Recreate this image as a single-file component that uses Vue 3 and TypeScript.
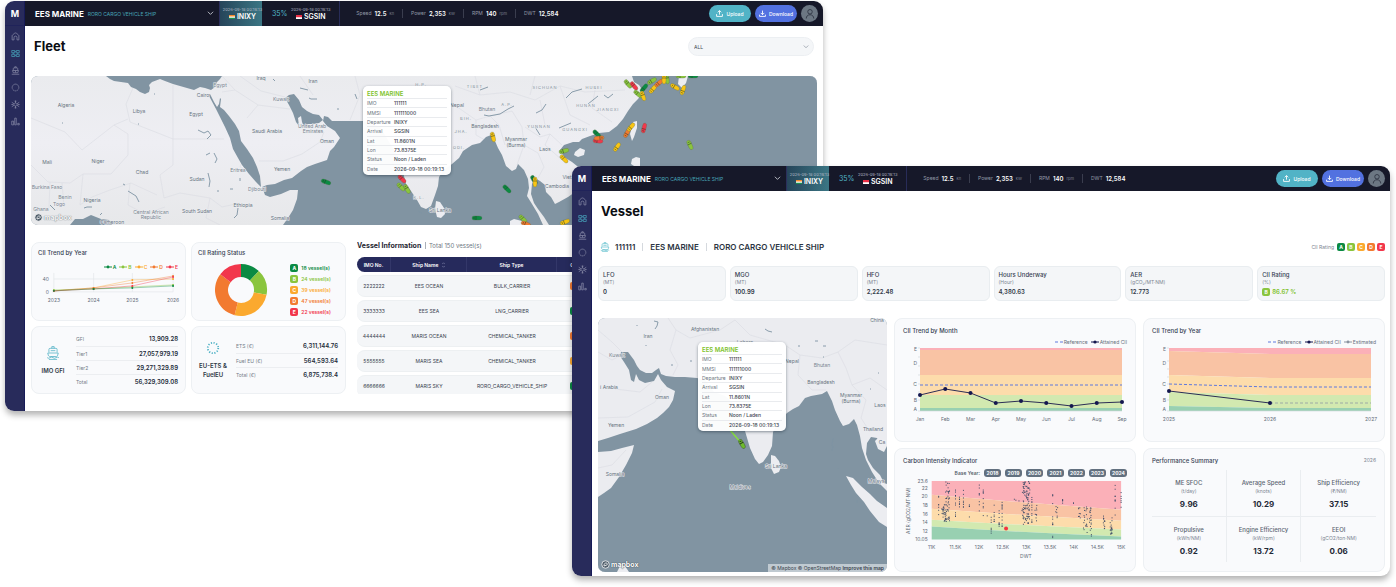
<script setup lang="ts">
interface Vessel { x: number; y: number; r: number; c: string }
interface Label { x: number; y: number; t: string; k?: string }

const windows = [
  { id: 'fleet', title: 'Fleet' },
  { id: 'vessel', title: 'Vessel' },
]

const colors: Record<string, string> = { A: '#0b8a43', B: '#8ac53e', C: '#fba92f', D: '#f27a30', E: '#f2374c' }
const grades = ['A', 'B', 'C', 'D', 'E']

const shipPath = 'M10 4V1h4v3M5 11V6a2 2 0 0 1 2-2h10a2 2 0 0 1 2 2v5M8 8h8M3 12h18l-1 4c-1 2-2 2-3 2H7c-1 0-2 0-3-2zM2 20q2.5 2 5 0t5 0 5 0 5 0M5 23h14'
const nav = [
  { name: 'Home', d: 'M3 21V10q0-1 1-2l6-5q2-1 4 0l6 5q1 1 1 2v11h-5v-6a4 4 0 0 0-8 0v6z', dash: '' },
  { name: 'Fleet', d: 'M2 4h8v6H2zM14 4h8v6h-8zM2 14h8v6H2zM14 14h8v6h-8zM10 7h4M10 17h4M6 10v4M18 10v4', dash: '' },
  { name: 'Vessel', d: 'M10 5V2h4v3M6 11V7q0-2 2-2h8q2 0 2 2v4M4 12h16l-2 6H6zM12 12v5M2 22h20', dash: '' },
  { name: 'EU ETS', d: 'M12 3a9 9 0 1 0 .01 0z', dash: '4 1' },
  { name: 'Engine', d: 'M12 8a4 4 0 1 0 .01 0zM12 1v7M12 16v7M2 6l6 4M16 14l6 4M22 6l-6 4M8 14l-6 4M9 2l3 3 3-3M9 22l3-3 3 3M1 12h5M18 12h5', dash: '' },
  { name: 'Reports', d: 'M2 11h5v10H2zM10 3h4v18h-4zM18 17h4v4h-4z', dash: '' },
]

const metrics = [
  { k: 'Speed', v: '12.5', u: 'kn' },
  { k: 'Power', v: '2,353', u: 'kW' },
  { k: 'RPM', v: '140', u: 'rpm' },
  { k: 'DWT', v: '12,584', u: '' },
]

const popup = [
  ['IMO', '111111'], ['MMSI', '111111000'], ['Departure', 'INIXY'], ['Arrival', 'SGSIN'],
  ['Lat', '11.8601N'], ['Lon', '73.8375E'], ['Status', 'Noon / Laden'], ['Date', '2026-09-18 00:19:13'],
]

const fleetSeas = [
  'M106 76L110 79 114 81 121 82 128 83 131 87 136 89 140 92 145 94 149 92 150 88 149 85 152 82 160 79 165 81 173 84 180 86 187 88 194 90 200 87 205 88 211 90 215 87 217 82 220 79 222 76Z',
  'M208 94L210 94 214 102 217 107 219 104 220 98 221 99 220 107 224 110 229 116 235 124 239 131 241 141 247 149 253 158 257 167 260 176 261 187 256 182 249 174 242 165 238 158 233 149 230 138 225 127 220 117 216 109Z',
  'M289 95L294 94 299 100 302 107 307 111 313 114 319 115 323 120 319 123 313 124 308 124 304 127 302 122 301 116 298 118 299 126 296 122 293 113 289 105 285 98Z',
  'M262 187L267 185 275 184 284 180 292 178 301 171 307 167 315 164 327 160 330 151 334 147 340 138 335 131 327 126 323 121 324 116 328 117 332 121 345 121 363 121 380 127 400 160 406 184 411 191 417 200 421 207 426 209 431 206 435 195 438 186 439 177 444 170 452 164 459 158 463 151 472 145 480 143 486 137 491 135 495 141 498 148 502 155 506 166 512 171 516 169 518 164 524 170 528 179 529 188 527 196 532 204 538 214 543 225 283 225 288 218 293 210 297 199 298 190 290 190 281 194 270 197 265 195Z',
  'M549 225L544 217 538 209 534 203 531 194 532 184 535 178 540 181 545 185 546 192 551 197 555 204 559 202 568 197 578 190 586 179 582 170 572 162 564 157 560 150 564 145 573 142 579 142 582 139 590 136 599 133 609 132 617 126 623 119 628 111 633 104 638 99 642 94 641 88 639 85 634 82 632 76 817 76 817 225Z',
  'M70 225L75 219 83 219 91 215 101 219 109 220 112 225Z',
]
const fleetIslands = [
  'M436 201L440 202 444 208 445 214 441 218 437 217 435 209Z',
  'M633 122L637 121 637 128 634 137 632 141 630 134Z',
  'M575 152L580 148 585 150 584 155 578 157 574 155Z',
  'M632 159L636 157 640 158 640 168 634 166 631 164Z',
  'M679 76L688 76 686 83 682 88 678 84Z',
  'M510 221L514 219 522 221 526 225 510 225Z',
]
const fleetBorders =
  'M31 118L65 132 82 150 114 125 128 119M133 88L126 104 130 122 173 139V85M173 139H224M173 139V165L160 175 164 198M114 125L128 134V155L111 174H83L70 183 48 182 31 165M83 174L80 205 92 197 110 190 131 183 157 195M164 198L180 193 210 198 222 207 240 203M210 198L206 218 220 225M247 149L240 167 253 174M222 76L235 90 258 105 290 109M222 92L235 90M258 105L247 118M283 161L302 154 320 142 324 132M283 161H259M240 76L261 91 285 97M300 76L313 95M355 76L360 95 350 120M130 183L128 205 145 214 165 207M50 182L49 208M62 183L64 207M453 104L476 120 490 116 512 111M476 120V135L485 140M490 116L499 125 505 145M512 111L522 127 524 145 517 165M525 127L540 137 550 134 562 145M524 145L538 153 544 167 538 178M550 134L545 145 561 159M455 86L480 95 510 92 535 100 560 86 585 92 625 90M540 100L545 125M560 86L570 115 590 125M595 90L592 108 612 122M480 95L475 76M535 76L530 95'
const fleetWater =
  'M198 130l6 3 4-2 3 4-4 4M206 155l4-2M214 153l3 6-2 4M84 208l3-1h5M208 173l2 8-1 6M238 208l-1 7-3 3M128 191l8 5 3 6M100 215l2-2M240 181v-3M50 205l5 5M62 123h1M138 124h1M154 94h1M337 109h2M355 94l2 5M309 98l2 1 6 0M484 115l5 1 11-2 8-5 6-3M566 98l6-6 10-3M536 113l6-3 4-6M559 128l12-5M604 95l4 3 5-4M588 104l10-8M540 135l-5-8M480 90l8-3M300 88l8 2M273 79l2 2M418 211l4 2M123 184l2 1M217 191h2M230 189h3'

const fleetLabels: Label[] = [
  { x: 66, y: 107, t: 'Algeria' }, { x: 139, y: 113, t: 'Libya' }, { x: 196, y: 116, t: 'Egypt' }, { x: 203, y: 97, t: 'Cairo' },
  { x: 220, y: 87, t: 'Egypt', k: 's' }, { x: 261, y: 80, t: 'Iraq' }, { x: 313, y: 83, t: 'Iran' }, { x: 281, y: 101, t: 'Kuwait', k: 's' },
  { x: 267, y: 133, t: 'Saudi Arabia' }, { x: 312, y: 128, t: 'United Arab', k: 's' }, { x: 313, y: 133, t: 'Emirates', k: 's' },
  { x: 327, y: 143, t: 'Oman' }, { x: 282, y: 171, t: 'Yemen' }, { x: 47, y: 164, t: 'Mali' }, { x: 98, y: 163, t: 'Niger' },
  { x: 142, y: 174, t: 'Chad' }, { x: 197, y: 181, t: 'Sudan' }, { x: 238, y: 172, t: 'Eritrea', k: 's' }, { x: 257, y: 191, t: 'Djibouti', k: 's' },
  { x: 47, y: 189, t: 'Burkina Faso', k: 's' }, { x: 65, y: 199, t: 'Benin', k: 's' }, { x: 59, y: 206, t: 'Togo', k: 's' }, { x: 92, y: 202, t: 'Nigeria' },
  { x: 151, y: 214, t: 'Central African', k: 's' }, { x: 151, y: 219, t: 'Republic', k: 's' }, { x: 197, y: 213, t: 'South Sudan' },
  { x: 243, y: 207, t: 'Ethiopia' }, { x: 280, y: 220, t: 'Somalia' }, { x: 112, y: 224, t: 'Cameroon' }, { x: 41, y: 211, t: 'Ghana', k: 's' },
  { x: 421, y: 86, t: 'H.P.', k: 'p' }, { x: 475, y: 88, t: 'TIBET', k: 'p' }, { x: 545, y: 89, t: 'SICHUAN', k: 'p' }, { x: 594, y: 89, t: 'HUBEI', k: 'p' },
  { x: 457, y: 107, t: 'Nepal' }, { x: 487, y: 111, t: 'Bhutan', k: 's' }, { x: 507, y: 106, t: 'A.P.', k: 'p' }, { x: 586, y: 107, t: 'HUNAN', k: 'p' },
  { x: 608, y: 111, t: 'JIANGXI', k: 'p' }, { x: 466, y: 120, t: 'BIH.', k: 'p' }, { x: 485, y: 128, t: 'Bangladesh' }, { x: 539, y: 128, t: 'YUNNAN', k: 'p' },
  { x: 575, y: 131, t: 'GUANGXI', k: 'p' }, { x: 461, y: 133, t: 'JHA.', k: 'p' }, { x: 459, y: 149, t: 'ODI.', k: 'p' }, { x: 516, y: 141, t: 'Myanmar' },
  { x: 516, y: 147, t: '(Burma)' }, { x: 545, y: 151, t: 'Laos' }, { x: 557, y: 188, t: 'Cambodia' },
  { x: 567, y: 179, t: 'Viet' }, { x: 440, y: 212, t: 'Sri Lanka' }, { x: 419, y: 199, t: 'K.L.', k: 'p' },
]

const v = (x: number, y: number, r: number, g: string): Vessel => ({ x, y, r, c: g })
const fleetVessels: Vessel[] = [
  v(326, 182, 20, 'A'), v(402, 179, 45, 'E'), v(401, 187, 45, 'B'), v(407, 189, 60, 'B'), v(493, 137, 75, 'Y'), v(534, 180, 60, 'A'),
  v(535, 182, 90, 'Y'), v(507, 189, 45, 'A'), v(477, 218, 0, 'A'), v(523, 219, 45, 'B'), v(526, 224, 20, 'D'), v(565, 222, -20, 'Y'),
  v(564, 151, -15, 'B'), v(564, 159, 45, 'Y'), v(597, 134, 45, 'A'), v(598, 141, 5, 'E'), v(599, 138, 175, 'D'), v(617, 147, -55, 'Y'),
  v(627, 133, -60, 'D'), v(631, 127, -50, 'Y'), v(644, 128, -75, 'E'), v(690, 145, 65, 'B'), v(628, 84, 50, 'B'), v(634, 86, 50, 'E'),
  v(644, 88, -50, 'A'), v(638, 94, 40, 'B'), v(643, 96, 70, 'Y'), v(652, 81, -30, 'B'), v(653, 89, -50, 'Y'), v(659, 83, -40, 'D'),
  v(667, 79, 80, 'B'), v(664, 79, 90, 'Y'), v(675, 87, 30, 'Y'), v(683, 90, -70, 'Y'), v(681, 76, 0, 'B'), v(693, 76, 0, 'A'),
]
const vesselFill = (g: string) => (g === 'Y' ? '#f9c513' : colors[g])

const vesselSeas = [
  'M621 352L628 352 631 356 634 360 637 366 640 370 646 373 652 373 656 370 659 368 661 374 666 376 675 377 685 377 697 378 705 380 714 392 725 396 735 405 741 418 745 431 750 448 755 459 759 464 763 462 768 455 772 446 773 432 779 421 787 413 793 409 799 406 805 398 811 396 822 394 827 391 829 395 832 401 835 410 840 421 843 426 849 424 854 419 857 425 860 436 862 448 866 460 872 472 879 483 887 491V572H598V497L604 493 611 488 619 477 626 465 632 453 634 445 622 448 611 451 598 452V441L608 438 620 434 636 429 647 424 657 418 663 413 669 407 673 400 675 391 667 387 661 380 658 374 654 381 645 383 639 380 636 374 634 382 631 380 629 370 624 362 620 356Z',
  'M887 445L880 442 877 438 871 437 867 443 866 454 868 460 873 468 880 475 884 483 887 484Z',
]
const vesselIslands = [
  'M771 455L775 456 779 461 781 467 779 472 774 474 771 468Z',
  'M846 476L853 478 862 487 870 494 877 501 887 508V527L879 522 870 511 864 502 856 493 851 485Z',
  'M617 572L620 566 625 566 629 572Z',
  'M875 441L878 438 887 440V446L884 452 878 449Z',
]
const vesselBorders =
  'M598 418L628 417 655 402 662 389M652 382L640 392 615 389M598 330L612 342 622 352M668 318L676 330 670 350 678 365 673 375M676 330L690 338 720 330 735 320M735 320L750 335 785 345 800 355 822 358 838 352M800 355L798 375 812 390 826 390M838 352L846 368 852 385 866 400 861 418M838 352L855 340 887 345M852 385L870 378 887 390M861 418L870 432M740 350L787 362M598 468L612 465 626 450M598 352L612 360 620 356'
const vesselWater =
  'M654 321l4 1-1 4-2 3M637 325v1M646 345v1M671 365h2M690 361h2M765 329l3 2 4 1M815 341h3M823 346h3M798 346h2M823 357h1M870 389h1M833 438l-1 8M833 446l-1 5M838 468v1M857 500v3M878 373h1'

const vesselLabels: Label[] = [
  { x: 705, y: 331, t: 'Afghanistan' }, { x: 648, y: 338, t: 'Iran' }, { x: 617, y: 357, t: 'Kuwait', k: 's' }, { x: 745, y: 344, t: 'Lahore', k: 's' },
  { x: 609, y: 389, t: 'i Arabia' }, { x: 662, y: 399, t: 'Oman' }, { x: 616, y: 427, t: 'Yemen' }, { x: 615, y: 476, t: 'Somalia' },
  { x: 792, y: 363, t: 'Nepal' }, { x: 822, y: 367, t: 'Bhutan', k: 's' }, { x: 821, y: 384, t: 'Bangladesh' }, { x: 851, y: 397, t: 'Myanmar' },
  { x: 851, y: 403, t: '(Burma)' }, { x: 880, y: 407, t: 'Laos' }, { x: 873, y: 431, t: 'Thailand' }, { x: 882, y: 444, t: 'Ca' },
  { x: 876, y: 483, t: 'Malays' }, { x: 776, y: 468, t: 'Sri Lanka' }, { x: 740, y: 489, t: 'Maldives' }, { x: 877, y: 322, t: 'China' },
]

const trend = [
  { g: 'C', p: [20, 17, 9, 8] },
  { g: 'D', p: [20, 17, 12, 5] },
  { g: 'B', p: [19, 18, 16, 14] },
  { g: 'E', p: [20, 18, 15, 6] },
  { g: 'A', p: [20, 18, 17, 15] },
]
const trendX = [22, 62, 101, 142]
const linePoints = (p: number[]) => p.map((y, i) => `${trendX[i]},${y}`).join(' ')

const rating = [
  { g: 'A', n: 18 }, { g: 'B', n: 24 }, { g: 'C', n: 39 }, { g: 'D', n: 47 }, { g: 'E', n: 22 },
]
const total = rating.reduce((s, r) => s + r.n, 0)
let acc = 0
const slices = rating.map((r) => {
  const a0 = (acc / total) * Math.PI * 2
  acc += r.n
  const a1 = (acc / total) * Math.PI * 2
  const pt = (rad: number, a: number) => `${27 + rad * Math.sin(a)} ${27 - rad * Math.cos(a)}`
  return { g: r.g, d: `M${pt(26, a0)}A26 26 0 0 1 ${pt(26, a1)}L${pt(13, a1)}A13 13 0 0 0 ${pt(13, a0)}Z` }
})

const gfi = [['GFI', '13,909.28'], ['Tier1', '27,057,979.19'], ['Tier2', '29,271,329.89'], ['Total', '56,329,309.08']]
const ets = [['ETS (€)', '6,311,144.76'], ['Fuel EU (€)', '564,593.64'], ['Total (€)', '6,875,738.4']]

const rows = [
  { imo: '2222222', name: 'EES OCEAN', type: 'BULK_CARRIER', g: 'D' },
  { imo: '3333333', name: 'EES SEA', type: 'LNG_CARRIER', g: 'A' },
  { imo: '4444444', name: 'MARIS OCEAN', type: 'CHEMICAL_TANKER', g: 'D' },
  { imo: '5555555', name: 'MARIS SEA', type: 'CHEMICAL_TANKER', g: 'C' },
  { imo: '6666666', name: 'MARIS SKY', type: 'RORO_CARGO_VEHICLE_SHIP', g: 'A' },
]

const stats = [
  { k: 'LFO', u: '(MT)', v: '0' },
  { k: 'MGO', u: '(MT)', v: '100.99' },
  { k: 'HFO', u: '(MT)', v: '2,222.48' },
  { k: 'Hours Underway', u: '(Hour)', v: '4,380.63' },
  { k: 'AER', u: '(gCO₂/MT·NM)', v: '12.773' },
  { k: 'CII Rating', u: '(%)', v: '86.67 %', g: 'B' },
]

const months = ['Jan', 'Feb', 'Mar', 'Apr', 'May', 'Jun', 'Jul', 'Aug', 'Sep']
const monthY = [49, 43, 47, 57, 55, 57, 60, 57, 56]
const monthX = (i: number) => 25 + (i * 202) / 8
const monthLine = monthY.map((y, i) => `${monthX(i)},${y}`).join(' ')
const bandColors = ['#fbb0b8', '#f9c3a4', '#fddcab', '#d2e9b0', '#98d0b1']
const monthBands = [2, 4, 29, 49, 62, 65]
const yearBands = [
  'M25 2H227V8H126L25 5Z', 'M25 5L126 8H227V32H126L25 29Z', 'M25 29L126 32H227V49H126L25 46Z',
  'M25 46L126 49H227V62H126L25 60Z', 'M25 60L126 62H227V65H25Z',
]
const gradeTicks = [
  { g: 'E', y: 3 }, { g: 'D', y: 17 }, { g: 'C', y: 38 }, { g: 'B', y: 54 }, { g: 'A', y: 63 },
]
const baseYears = [2018, 2019, 2020, 2021, 2022, 2023, 2024]
const scatterBands = [
  'M37 4H228V33Q130 26 37 18Z', 'M37 18Q130 26 228 33V44Q130 39 37 32Z', 'M37 32Q130 39 228 44V53Q130 49 37 43Z',
  'M37 43Q130 49 228 53V60Q130 56 37 50Z', 'M37 50Q130 56 228 60V63H37Z',
]
const scatterY = [['23.6', 4], ['22', 11], ['20', 19], ['18', 28], ['16', 37], ['14', 45], ['12', 54], ['10.05', 63]] as [string, number][]
const scatterX = ['11K', '11.5K', '12K', '12.5K', '13K', '13.5K', '14K', '14.5K', '15K']

const clusters: [number, number, number, number, number][] = [
  [44, 0, 14, 40, 7], [49, 2, 27, 46, 26], [53, 2, 5, 46, 46], [61, 0, 9, 40, 10], [65, 0, 20, 34, 8], [69, 0, 13, 32, 8],
  [75, 0, 28, 41, 4], [85, 0, 4, 35, 8], [89, 0, 13, 41, 9], [93, 0, 39, 41, 1], [97, 0, 28, 59, 7], [100, 0, 27, 45, 7], [105, 0, 32, 52, 8],
  [108, 0, 25, 52, 12], [121, 1, 22, 24, 2], [125, 0, 24, 25, 1], [129, 1, 5, 52, 22], [133, 3, 4, 48, 72], [138, 0, 19, 50, 12],
  [142, 1, 28, 46, 9], [159, 0, 17, 62, 12], [163, 1, 26, 42, 7], [169, 0, 20, 30, 5], [180, 0, 24, 28, 2], [186, 1, 28, 42, 8],
  [192, 2, 30, 56, 20], [197, 1, 31, 54, 16], [198, 0, 52, 61, 3], [211, 1, 38, 54, 12], [218, 1, 41, 58, 18], [222, 0, 8, 45, 9], [228, 0, 15, 31, 6],
]
let seed = 7
const rand = () => {
  seed = (seed * 16807) % 2147483647
  return seed / 2147483647
}
const dots = clusters.flatMap(([x, sp, a, b, n]) =>
  Array.from({ length: n }, () => ({ x: x + (rand() * 2 - 1) * sp, y: a + rand() * (b - a) })),
)

const perf = [
  { k: 'ME SFOC', u: '(t/day)', v: '9.96' },
  { k: 'Average Speed', u: '(knots)', v: '10.29' },
  { k: 'Ship Efficiency', u: '(₹/NM)', v: '37.15' },
  { k: 'Propulsive', u: '(kWh/NM)', v: '0.92' },
  { k: 'Engine Efficiency', u: '(kW/rpm)', v: '13.72' },
  { k: 'EEOI', u: '(gCO2/ton·NM)', v: '0.06' },
]
</script>

<template>
  <main class="stage">
    <section v-for="w in windows" :key="w.id" class="window" :class="w.id">
      <nav class="side" aria-label="Main">
        <div class="logo">M</div>
        <a v-for="n in nav" :key="n.name" href="#" class="nav" :class="{ on: n.name === 'Fleet' }" :aria-label="n.name">
          <svg viewBox="0 0 24 24"><path :d="n.d" :stroke-dasharray="n.dash" /></svg>
        </a>
      </nav>

      <div class="main">
        <header class="top">
          <button class="picker">
            <strong>EES MARINE</strong>
            <span>RORO CARGO VEHICLE SHIP</span>
            <svg viewBox="0 0 8 8" class="chev"><path d="M1 2l3 3 3-3" /></svg>
          </button>
          <div class="port from">
            <time>2026-09-18 00:19:13</time>
            <b><svg viewBox="0 0 6 4"><path fill="#fff" d="M0 0h6v4H0z" /><path fill="#f58a2c" d="M0 0h6v1.4H0z" /><path fill="#1b9150" d="M0 2.7h6V4H0z" /></svg>INIXY</b>
          </div>
          <div class="pct">35%</div>
          <div class="port to">
            <time>2026-09-18 00:19:13</time>
            <b><svg viewBox="0 0 6 4"><path fill="#fff" d="M0 0h6v4H0z" /><path fill="#ea2d45" d="M0 0h6v2.2H0z" /></svg>SGSIN</b>
          </div>
          <ul class="metrics">
            <li v-for="m in metrics" :key="m.k"><small>{{ m.k }}</small><b>{{ m.v }}</b><small v-if="m.u" class="unit">{{ m.u }}</small></li>
          </ul>
          <div class="actions">
            <button class="pill up"><svg viewBox="0 0 12 12"><path d="M6 8V1M3 4l3-3 3 3M1 7v4h10V7" /></svg>Upload</button>
            <button class="pill down"><svg viewBox="0 0 12 12"><path d="M6 1v7M3 5l3 3 3-3M1 8v3h10V8" /></svg>Download</button>
            <button class="avatar" aria-label="Account"><svg viewBox="0 0 16 16"><circle cx="8" cy="5" r="3" /><path d="M3 14c0-3 2-5 5-5s5 2 5 5" /></svg></button>
          </div>
        </header>

        <div class="content">
          <div class="heading">
            <h1>{{ w.title }}</h1>
            <label v-if="w.id === 'fleet'" class="filter">
              <select aria-label="Vessel filter"><option>ALL</option></select>
              <svg viewBox="0 0 8 8" class="chev"><path d="M1 2l3 3 3-3" /></svg>
            </label>
          </div>

          <template v-if="w.id === 'fleet'">
            <div class="map">
              <svg viewBox="31 76 786 149" preserveAspectRatio="xMidYMid slice">
                <defs><linearGradient id="landA" x1="0" y1="0" x2="0" y2="1"><stop offset="0" stop-color="#eaebee" /><stop offset=".45" stop-color="#eeeef3" /><stop offset="1" stop-color="#e7e8ea" /></linearGradient></defs>
                <rect x="31" y="76" width="786" height="149" fill="url(#landA)" />
                <path class="border" :d="fleetBorders" />
                <path v-for="s in fleetSeas" :key="s" class="sea" :d="s" />
                <path class="water" :d="fleetWater" />
                <path v-for="s in fleetIslands" :key="s" class="land" :d="s" />
                <text v-for="l in fleetLabels" :key="l.t + l.x" :x="l.x" :y="l.y" :class="l.k">{{ l.t }}</text>
                <g v-for="(s, i) in fleetVessels" :key="i" :transform="`translate(${s.x} ${s.y}) rotate(${s.r})`">
                  <path d="M-5 0Q-5-2-3-2H2Q5-2 5 0Q5 2 2 2H-3Q-5 2-5 0Z" :fill="vesselFill(s.c)" stroke="#5b6b4a" stroke-width=".3" />
                  <path d="M-3-1V1M-1-2V2" stroke="#26351f" stroke-width=".8" opacity=".6" />
                </g>
              </svg>
              <div class="brand"><svg viewBox="0 0 12 12"><circle cx="6" cy="6" r="5" /><path d="M4 8c0-3 1-4 3-4s2 3 0 3z" /></svg><span>mapbox</span></div>
              <div class="popup">
                <h4>EES MARINE</h4>
                <dl><div v-for="p in popup" :key="p[0]"><dt>{{ p[0] }}</dt><dd>{{ p[1] }}</dd></div></dl>
              </div>
            </div>

            <div class="lower">
              <article class="card">
                <h3>CII Trend by Year</h3>
                <div class="legend mini">
                  <span v-for="g in grades" :key="g" :style="{ color: colors[g] }"><svg viewBox="0 0 8 4"><path d="M0 2h8" stroke="currentColor" /><circle cx="4" cy="2" r="1.4" fill="currentColor" /></svg>{{ g }}</span>
                </div>
                <svg class="chart" viewBox="0 0 154 36">
                  <path d="M22 2V21M62 2V21M101 2V21M142 2V21M22 8H142M20 21H142" stroke="#e3e6eb" stroke-width=".7" />
                  <text x="17" y="10" text-anchor="end">40</text><text x="17" y="23" text-anchor="end">0</text>
                  <g v-for="t in trend" :key="t.g" :stroke="colors[t.g]" :fill="colors[t.g]">
                    <polyline :points="linePoints(t.p)" fill="none" stroke-width=".5" opacity=".8" />
                    <circle v-for="(y, i) in t.p" :key="i" :cx="trendX[i]" :cy="y" r="1" stroke="none" />
                  </g>
                  <text v-for="(x, i) in trendX" :key="x" :x="x" y="31" text-anchor="middle">{{ 2023 + i }}</text>
                </svg>
              </article>

              <article class="card">
                <h3>CII Rating Status</h3>
                <div class="donut">
                  <svg viewBox="0 0 54 54"><path v-for="s in slices" :key="s.g" :d="s.d" :fill="colors[s.g]" /></svg>
                  <ul>
                    <li v-for="r in rating" :key="r.g" :style="{ color: colors[r.g] }"><i class="badge" :style="{ background: colors[r.g] }">{{ r.g }}</i>{{ r.n }} vessel(s)</li>
                  </ul>
                </div>
              </article>

              <article class="card sums">
                <div class="emblem"><svg viewBox="0 0 24 24"><path :d="shipPath" /></svg><strong>IMO GFI</strong></div>
                <dl><div v-for="g in gfi" :key="g[0]"><dt>{{ g[0] }}</dt><dd>{{ g[1] }}</dd></div></dl>
              </article>

              <article class="card sums">
                <div class="emblem"><svg viewBox="0 0 24 24" class="stars"><circle cx="12" cy="12" r="9" /></svg><strong>EU-ETS &amp; FuelEU</strong></div>
                <dl><div v-for="g in ets" :key="g[0]"><dt>{{ g[0] }}</dt><dd>{{ g[1] }}</dd></div></dl>
              </article>

              <section class="info">
                <h2>Vessel Information <small>Total 150 vessel(s)</small></h2>
                <table>
                  <colgroup><col class="c1" /><col class="c2" /><col class="c3" /><col class="c4" /><col /></colgroup>
                  <thead>
                    <tr>
                      <th>IMO No.</th>
                      <th>Ship Name <svg viewBox="0 0 4 8" class="sort"><path d="M0 3l2-2 2 2M0 5l2 2 2-2" /></svg></th>
                      <th>Ship Type</th><th>CII</th><th></th>
                    </tr>
                  </thead>
                  <tbody>
                    <tr v-for="r in rows" :key="r.imo">
                      <td>{{ r.imo }}</td><td>{{ r.name }}</td><td>{{ r.type }}</td>
                      <td><i class="badge" :style="{ background: colors[r.g] }">{{ r.g }}</i></td><td></td>
                    </tr>
                  </tbody>
                </table>
              </section>
            </div>
          </template>

          <template v-else>
            <div class="ident">
              <svg viewBox="0 0 24 24"><path :d="shipPath" /></svg>
              <b>111111</b><b>EES MARINE</b><b>RORO CARGO VEHICLE SHIP</b>
              <div class="scale"><span>CII Rating</span><i v-for="g in grades" :key="g" class="badge" :style="{ background: colors[g] }">{{ g }}</i></div>
            </div>

            <div class="stats">
              <article v-for="s in stats" :key="s.k" class="stat">
                <h3>{{ s.k }}</h3><small>{{ s.u }}</small>
                <b :class="{ good: s.g }"><i v-if="s.g" class="badge" :style="{ background: colors[s.g] }">{{ s.g }}</i>{{ s.v }}</b>
              </article>
            </div>

            <div class="board">
              <div class="map tall">
                <svg viewBox="598 318 289 254" preserveAspectRatio="xMidYMid slice">
                  <rect x="598" y="318" width="289" height="254" fill="#ebecf0" />
                  <path class="border" :d="vesselBorders" />
                  <path v-for="s in vesselSeas" :key="s" class="sea" :d="s" />
                  <path class="water" :d="vesselWater" />
                  <path v-for="s in vesselIslands" :key="s" class="land" :d="s" />
                  <text v-for="l in vesselLabels" :key="l.t + l.x" :x="l.x" :y="l.y" :class="l.k">{{ l.t }}</text>
                  <path d="M717 415L742 444" stroke="#86e03a" stroke-width="1.4" />
                  <g transform="translate(742 444) rotate(60)">
                    <path d="M-5 0Q-5-2-3-2H2Q5-2 5 0Q5 2 2 2H-3Q-5 2-5 0Z" fill="#6dbb2c" stroke="#33442e" stroke-width=".4" />
                    <path d="M-3-1V1M-1-2V2" stroke="#26351f" />
                  </g>
                </svg>
                <div class="brand"><svg viewBox="0 0 12 12"><circle cx="6" cy="6" r="5" /><path d="M4 8c0-3 1-4 3-4s2 3 0 3z" /></svg><span>mapbox</span></div>
                <div class="popup">
                  <h4>EES MARINE</h4>
                  <dl><div v-for="p in popup" :key="p[0]"><dt>{{ p[0] }}</dt><dd>{{ p[1] }}</dd></div></dl>
                </div>
                <div class="credit"><a href="#">© Mapbox</a> <a href="#">© OpenStreetMap</a> <a href="#"><b>Improve this map</b></a></div>
              </div>

              <article class="card">
                <h3>CII Trend by Month</h3>
                <div class="legend">
                  <span><svg viewBox="0 0 8 4"><path d="M0 2h8" stroke="#5f78dd" stroke-dasharray="3 2" /></svg>Reference</span>
                  <span><svg viewBox="0 0 8 4"><path d="M0 2h8" stroke="#14174f" /><circle cx="4" cy="2" r="1.6" fill="#14174f" /></svg>Attained CII</span>
                </div>
                <svg class="chart" viewBox="0 0 240 84">
                  <rect v-for="(c, i) in bandColors" :key="c" x="25" :y="monthBands[i]" width="202" :height="monthBands[i + 1] - monthBands[i]" :fill="c" />
                  <path d="M23 2h2M23 11h2M23 20h2M23 29h2M23 38h2M23 46h2M23 54h2M23 65h204" stroke="#d3d8de" stroke-width=".7" />
                  <path d="M25 39H227" stroke="#5f78dd" stroke-dasharray="3 2" />
                  <polyline :points="monthLine" fill="none" stroke="#2b2d55" />
                  <template v-for="(m, i) in months" :key="m">
                    <circle :cx="monthX(i)" :cy="monthY[i]" r="2" fill="#14174f" />
                    <text :x="monthX(i)" y="75" text-anchor="middle">{{ m }}</text>
                  </template>
                  <text v-for="t in gradeTicks" :key="t.g" x="22" :y="t.y + 2" text-anchor="end">{{ t.g }}</text>
                </svg>
              </article>

              <article class="card">
                <h3>CII Trend by Year</h3>
                <div class="legend">
                  <span><svg viewBox="0 0 8 4"><path d="M0 2h8" stroke="#5f78dd" stroke-dasharray="3 2" /></svg>Reference</span>
                  <span><svg viewBox="0 0 8 4"><path d="M0 2h8" stroke="#14174f" /><circle cx="4" cy="2" r="1.6" fill="#14174f" /></svg>Attained CII</span>
                  <span><svg viewBox="0 0 8 4"><path d="M0 2h8" stroke="#8a93a0" /><circle cx="4" cy="2" r="1.4" fill="#8a93a0" /></svg>Estimated</span>
                </div>
                <svg class="chart" viewBox="0 0 240 84">
                  <path v-for="(b, i) in yearBands" :key="b" :d="b" :fill="bandColors[i]" />
                  <path d="M23 2h2M23 15h2M23 23h2M23 31h2M23 38h2M23 46h2M23 54h2M23 65h204" stroke="#d3d8de" stroke-width=".7" />
                  <path d="M25 38L126 41H227" fill="none" stroke="#5f78dd" stroke-dasharray="3 2" />
                  <path d="M126 57H227" stroke="#9099a5" stroke-dasharray="3 2" stroke-width=".8" />
                  <path d="M25 45L126 57" stroke="#2b2d55" />
                  <circle cx="25" cy="45" r="2" fill="#14174f" /><circle cx="126" cy="57" r="2" fill="#14174f" />
                  <text x="25" y="75" text-anchor="middle">2025</text><text x="126" y="75" text-anchor="middle">2026</text><text x="227" y="75" text-anchor="middle">2027</text>
                  <text v-for="t in gradeTicks" :key="t.g" x="22" :y="t.y + 2" text-anchor="end">{{ t.g }}</text>
                </svg>
              </article>

              <article class="card">
                <h3>Carbon Intensity Indicator</h3>
                <div class="years"><span>Base Year:</span><button v-for="y in baseYears" :key="y">{{ y }}</button></div>
                <svg class="chart" viewBox="0 0 242 88">
                  <path v-for="(b, i) in scatterBands" :key="b" :d="b" :fill="bandColors[i]" />
                  <rect v-for="(d, i) in dots" :key="i" :x="d.x - 0.5" :y="d.y - 0.5" width="1" height="1" fill="#3d4a66" />
                  <circle cx="112" cy="52" r="2" fill="#f5333f" />
                  <text v-for="t in scatterY" :key="t[0]" x="33" :y="t[1] + 2" text-anchor="end">{{ t[0] }}</text>
                  <text v-for="(t, i) in scatterX" :key="t" :x="37 + (i * 191) / 8" y="73" text-anchor="middle">{{ t }}</text>
                  <text x="132" y="82" text-anchor="middle">DWT</text>
                  <text transform="translate(15 34) rotate(-90)" text-anchor="middle">AER (gCO2/MT·NM)</text>
                </svg>
              </article>

              <article class="card">
                <h3>Performance Summary <small>2026</small></h3>
                <div class="perf">
                  <div v-for="p in perf" :key="p.k"><h4>{{ p.k }}</h4><small>{{ p.u }}</small><b>{{ p.v }}</b></div>
                </div>
              </article>
            </div>
          </template>
        </div>
      </div>
    </section>
  </main>
</template>

<style>
body {
  margin: 0;
  background: #fff;
}
</style>

<style scoped>
.stage {
  display: grid;
  grid-template-columns: 567fr 251fr 567fr;
  padding: 1px 6px 11px 5px;
  font: 400 5px/8px Inter, 'Noto Sans', sans-serif;
  color: #3a4351;
}
.stage * { box-sizing: border-box; }
h1, h2, h3, h4, dl, dd, ul { margin: 0; padding: 0; }
ul { list-style: none; }
button, select { font: inherit; color: inherit; border: 0; padding: 0; margin: 0; background: none; cursor: pointer; }
svg { display: block; }
small { font-size: 5px; font-weight: 400; color: #7c8692; }

.window {
  grid-row: 1;
  display: flex;
  min-width: 0;
  align-self: start;
  background: #fff;
  border-radius: 9px;
  box-shadow: 0 4px 6px rgba(0, 0, 0, 0.3);
  overflow: hidden;
}
.window.fleet { grid-column: 1 / 3; }
.window.vessel { grid-column: 2 / 4; margin-top: 165px; z-index: 1; }

.side { flex: none; width: 20px; background: #282b5b; border-right: 1px solid #171b58; }
.logo {
  height: 25px;
  margin-bottom: 2px;
  padding-left: 1px;
  border-bottom: 1px solid #20235a;
  color: #fff;
  font: 700 9px/25px Inter, sans-serif;
  text-align: center;
}
.nav { display: grid; place-items: center; height: 17px; padding-left: 1px; }
.nav svg { width: 9px; height: 9px; fill: none; stroke: #8588a6; stroke-width: 2; }
.nav.on svg { stroke: #459db5; }

.main { flex: 1; min-width: 0; }
.top { display: flex; align-items: center; height: 25px; background: #161829; color: #fff; }
.picker { display: flex; align-items: center; gap: 4px; width: 194px; height: 25px; padding: 0 5px 0 10px; white-space: nowrap; }
.picker strong { font-size: 8px; font-weight: 700; color: #fff; }
.picker span { color: #48a5b8; }
.chev { width: 7px; height: 7px; fill: none; stroke: #c8ccd4; stroke-width: 1; }
.picker .chev { margin-left: auto; }
.port { display: flex; flex-direction: column; align-items: center; justify-content: center; height: 25px; white-space: nowrap; }
.port time { font-size: 4px; line-height: 6px; color: #b4bac6; }
.port b { display: flex; align-items: center; gap: 2px; font-size: 7px; line-height: 8px; font-weight: 600; }
.port svg { width: 6px; height: 4px; }
.from { width: 43px; padding-left: 3px; background: linear-gradient(90deg, #26455a, #3b7684); border-left: 1px solid #2b2f5c; }
.pct { width: 29px; padding-left: 10px; color: #52b7c8; font-size: 7px; }
.to { padding-right: 9px; border-right: 1px solid #282c58; }
.metrics { display: flex; align-items: center; margin-left: 8px; white-space: nowrap; }
.metrics li { display: flex; align-items: center; gap: 3px; padding: 0 8px; line-height: 9px; }
.metrics li + li { border-left: 1px solid #3a3d4e; }
.metrics b { font-size: 6px; font-weight: 600; }
.metrics small { font-size: 5px; color: #9298a6; }
.metrics .unit { font-size: 4px; color: #7a8090; }
.actions { display: flex; align-items: center; gap: 4px; margin-left: auto; padding-right: 5px; }
.pill { display: flex; align-items: center; justify-content: center; gap: 3px; width: 42px; height: 17px; border-radius: 9px; color: #fff; font-weight: 500; }
.pill svg { width: 7px; height: 7px; fill: none; stroke: #fff; stroke-width: 1.5; }
.up { background: #51b3c6; }
.down { background: #5271e0; }
.avatar { display: grid; place-items: center; width: 17px; height: 17px; border-radius: 50%; background: #6c7783; }
.avatar svg { width: 12px; height: 12px; fill: none; stroke: #252b3a; }

.content { padding: 11px 6px 0; }
.fleet .content { padding-bottom: 17px; }
.vessel .content { padding: 11px 5px 4px 6px; }
.heading { display: flex; align-items: center; justify-content: space-between; height: 19px; padding: 0 3px; }
h1 { font: 700 13px/19px Inter, sans-serif; color: #0b0d12; }
.filter { position: relative; width: 126px; }
.filter select { appearance: none; width: 100%; height: 19px; padding: 0 5px; border: 1px solid #eceff2; border-radius: 10px; background: #f4f6f8; color: #3f4854; }
.filter .chev { position: absolute; right: 5px; top: 7px; width: 6px; height: 6px; stroke: #8f98a3; }

.map { position: relative; height: 149px; margin-top: 20px; border-radius: 7px; overflow: hidden; background: #8194a2; }
.map > svg { width: 100%; height: 100%; }
.map.tall { height: auto; margin: 0; grid-row: span 2; }
.map.tall > svg { position: absolute; inset: 0; }
.sea { fill: #8194a2; }
.land { fill: #ecedf1; }
.border { fill: none; stroke: #dadbe2; stroke-width: 0.6; }
.water { fill: none; stroke: #7e93a3; stroke-width: 0.9; }
.map text { font-size: 5px; fill: #66727e; text-anchor: middle; paint-order: stroke; stroke: #eceef1; stroke-width: 0.9; }
.map text.s { fill: #7a8590; }
.map text.p { font-size: 4px; letter-spacing: 1px; fill: #84909b; }
.brand { position: absolute; left: 3px; bottom: 3px; display: flex; align-items: center; gap: 1px; font-size: 7px; font-weight: 700; color: #fff; text-shadow: 0 0 1px #3b4650, 0 0 1px #3b4650; }
.brand svg { width: 9px; height: 9px; fill: #53616d; stroke: #fff; }
.fleet .brand span { opacity: 0.6; }
.popup { position: absolute; left: 332px; top: 10px; width: 88px; height: 89px; padding: 3px 4px; border-radius: 5px; background: rgba(255, 255, 255, 0.97); box-shadow: 0 1px 3px rgba(30, 45, 60, 0.5); }
.tall .popup { left: 100px; top: 24px; }
.popup h4 { font-size: 6px; line-height: 9px; font-weight: 600; color: #80c22c; }
.popup dl { display: grid; grid-template-rows: repeat(8, 1fr); height: 75px; }
.popup dl div { display: grid; grid-template-columns: 27px 1fr; align-items: center; border-top: 1px solid #e9ebee; }
.popup dt { color: #6c7580; }
.popup dd { font-weight: 500; color: #3d4550; white-space: nowrap; }
.credit { position: absolute; right: 0; bottom: 0; padding: 0 3px; background: rgba(255, 255, 255, 0.5); white-space: nowrap; }
.credit a { color: #38424c; text-decoration: none; }
.credit b { font-weight: 600; }

.lower { display: grid; grid-template-columns: 155fr 155fr 466fr; grid-template-rows: minmax(79px, auto) minmax(68px, auto); gap: 5px; margin-top: 17px; }
.card { min-width: 0; border: 1px solid #edf0f3; border-radius: 8px; background: #f9fafc; }
.card h3, .stat h3 { font-size: 6px; line-height: 9px; font-weight: 500; color: #364152; }
.card > h3 { display: flex; justify-content: space-between; padding: 7px 8px 0 8px; }
.fleet .card > h3 { padding: 5px 6px 0; }
.chart { width: 100%; height: auto; }
.chart text { font-size: 5px; fill: #636c78; }
.legend { display: flex; justify-content: flex-end; gap: 3px; margin-top: 3px; padding-right: 8px; line-height: 8px; color: #66707c; }
.legend span { display: flex; align-items: center; gap: 1px; }
.legend svg { width: 8px; height: 4px; }
.legend.mini { margin-top: 6px; padding-right: 7px; font-weight: 600; }
.badge { display: inline-block; width: 8px; height: 8px; border-radius: 2px; color: #fff; font: 700 5px/8px Inter, sans-serif; text-align: center; }
.donut { display: flex; justify-content: space-between; align-items: center; margin-top: 5px; padding: 0 14px 0 22px; }
.donut svg { width: 54px; height: 54px; }
.donut li { display: flex; align-items: center; gap: 3px; height: 11px; font-size: 5px; font-weight: 600; }
.sums { display: flex; align-items: center; padding: 0 7px 0 3px; }
.emblem { display: flex; flex-direction: column; align-items: center; gap: 6px; width: 36px; text-align: center; line-height: 9px; }
.emblem svg { width: 14px; height: 14px; fill: none; stroke: #4cb0c4; stroke-width: 1.3; }
.emblem .stars circle { stroke-width: 3; stroke-dasharray: 2 2.7; }
.emblem strong { font-size: 6px; font-weight: 600; color: #2f3946; }
.sums dl { flex: 1; margin-left: 5px; }
.sums dl div { display: flex; justify-content: space-between; align-items: center; height: 14px; }
.sums dl div + div { border-top: 1px solid #eceef1; }
.sums dt { color: #747d88; }
.sums dd { font-size: 6px; font-weight: 600; color: #232c3a; }

.info { grid-column: 3; grid-row: 1 / 3; min-width: 0; height: 152px; margin-left: 6px; overflow: hidden; }
.info h2 { font-size: 7px; line-height: 8px; font-weight: 700; color: #1f2733; white-space: nowrap; }
.info h2 small { margin-left: 2px; padding-left: 3px; border-left: 1px solid #a9b0b8; font-size: 6px; color: #6d7681; }
table { width: 100%; margin-top: 4px; table-layout: fixed; border-collapse: separate; border-spacing: 0 3px; text-align: center; }
.c1 { width: 34px; }
.c2 { width: 76px; }
.c3 { width: 90px; }
.c4 { width: 34px; }
th { height: 15px; padding: 0; background: #262a5c; color: #fff; font-weight: 600; border-right: 1px solid #333769; }
td { height: 22px; padding: 0; background: #f4f6f8; border: solid #edf0f2; border-width: 1px 0; color: #38414e; }
th:first-child, td:first-child { border-radius: 8px 0 0 8px; }
th:last-child, td:last-child { border-radius: 0 8px 8px 0; }
.sort { display: inline-block; width: 3px; height: 6px; margin-left: 2px; vertical-align: middle; fill: none; stroke: #8c90b4; stroke-width: 0.8; }

.ident { display: flex; align-items: center; height: 10px; margin-top: 21px; padding: 0 0 0 2px; }
.ident > svg { width: 10px; height: 10px; margin-right: 5px; fill: none; stroke: #5bbccb; stroke-width: 1.6; }
.ident b { font-size: 8px; font-weight: 600; color: #2b3442; }
.ident b + b { margin-left: 7px; padding-left: 7px; border-left: 1px solid #d5d9de; }
.scale { display: flex; align-items: center; gap: 2px; margin-left: auto; color: #7d8691; }
.scale span { margin-right: 1px; }
.stats { display: grid; grid-template-columns: repeat(6, 1fr); gap: 4px; margin-top: 14px; }
.stat { display: flex; flex-direction: column; height: 35px; padding: 3px 4px; border: 1px solid #e9edf0; border-radius: 6px; background: #f4f6f8; }
.stat small { line-height: 7px; }
.stat b { display: flex; align-items: center; gap: 2px; margin-top: 2px; font-size: 6px; line-height: 8px; font-weight: 600; color: #303947; }
.stat b.good { color: #80c22c; }

.board { display: grid; grid-template-columns: 289fr 242fr 242fr; grid-template-rows: repeat(2, minmax(124px, auto)); gap: 6px 7px; margin-top: 17px; }
.years { display: flex; align-items: center; justify-content: flex-end; gap: 4px; margin-top: 4px; padding-right: 8px; color: #4b5563; font-weight: 500; }
.years button { width: 17px; height: 8px; border-radius: 3px; background: #62707f; color: #fff; font-weight: 700; line-height: 8px; }
.perf { display: grid; grid-template-columns: repeat(3, 1fr); margin: 5px 8px 0; }
.perf div { display: flex; flex-direction: column; align-items: center; height: 46px; padding-top: 9px; }
.perf div:nth-child(n + 4) { border-top: 1px solid #eaedf0; }
.perf div:not(:nth-child(3n)) { border-right: 1px solid #eaedf0; }
.perf h4 { font-size: 6px; line-height: 8px; font-weight: 500; color: #5c6672; white-space: nowrap; }
.perf b { margin-top: 4px; font-size: 8px; line-height: 10px; font-weight: 700; color: #1f2937; }
</style>
